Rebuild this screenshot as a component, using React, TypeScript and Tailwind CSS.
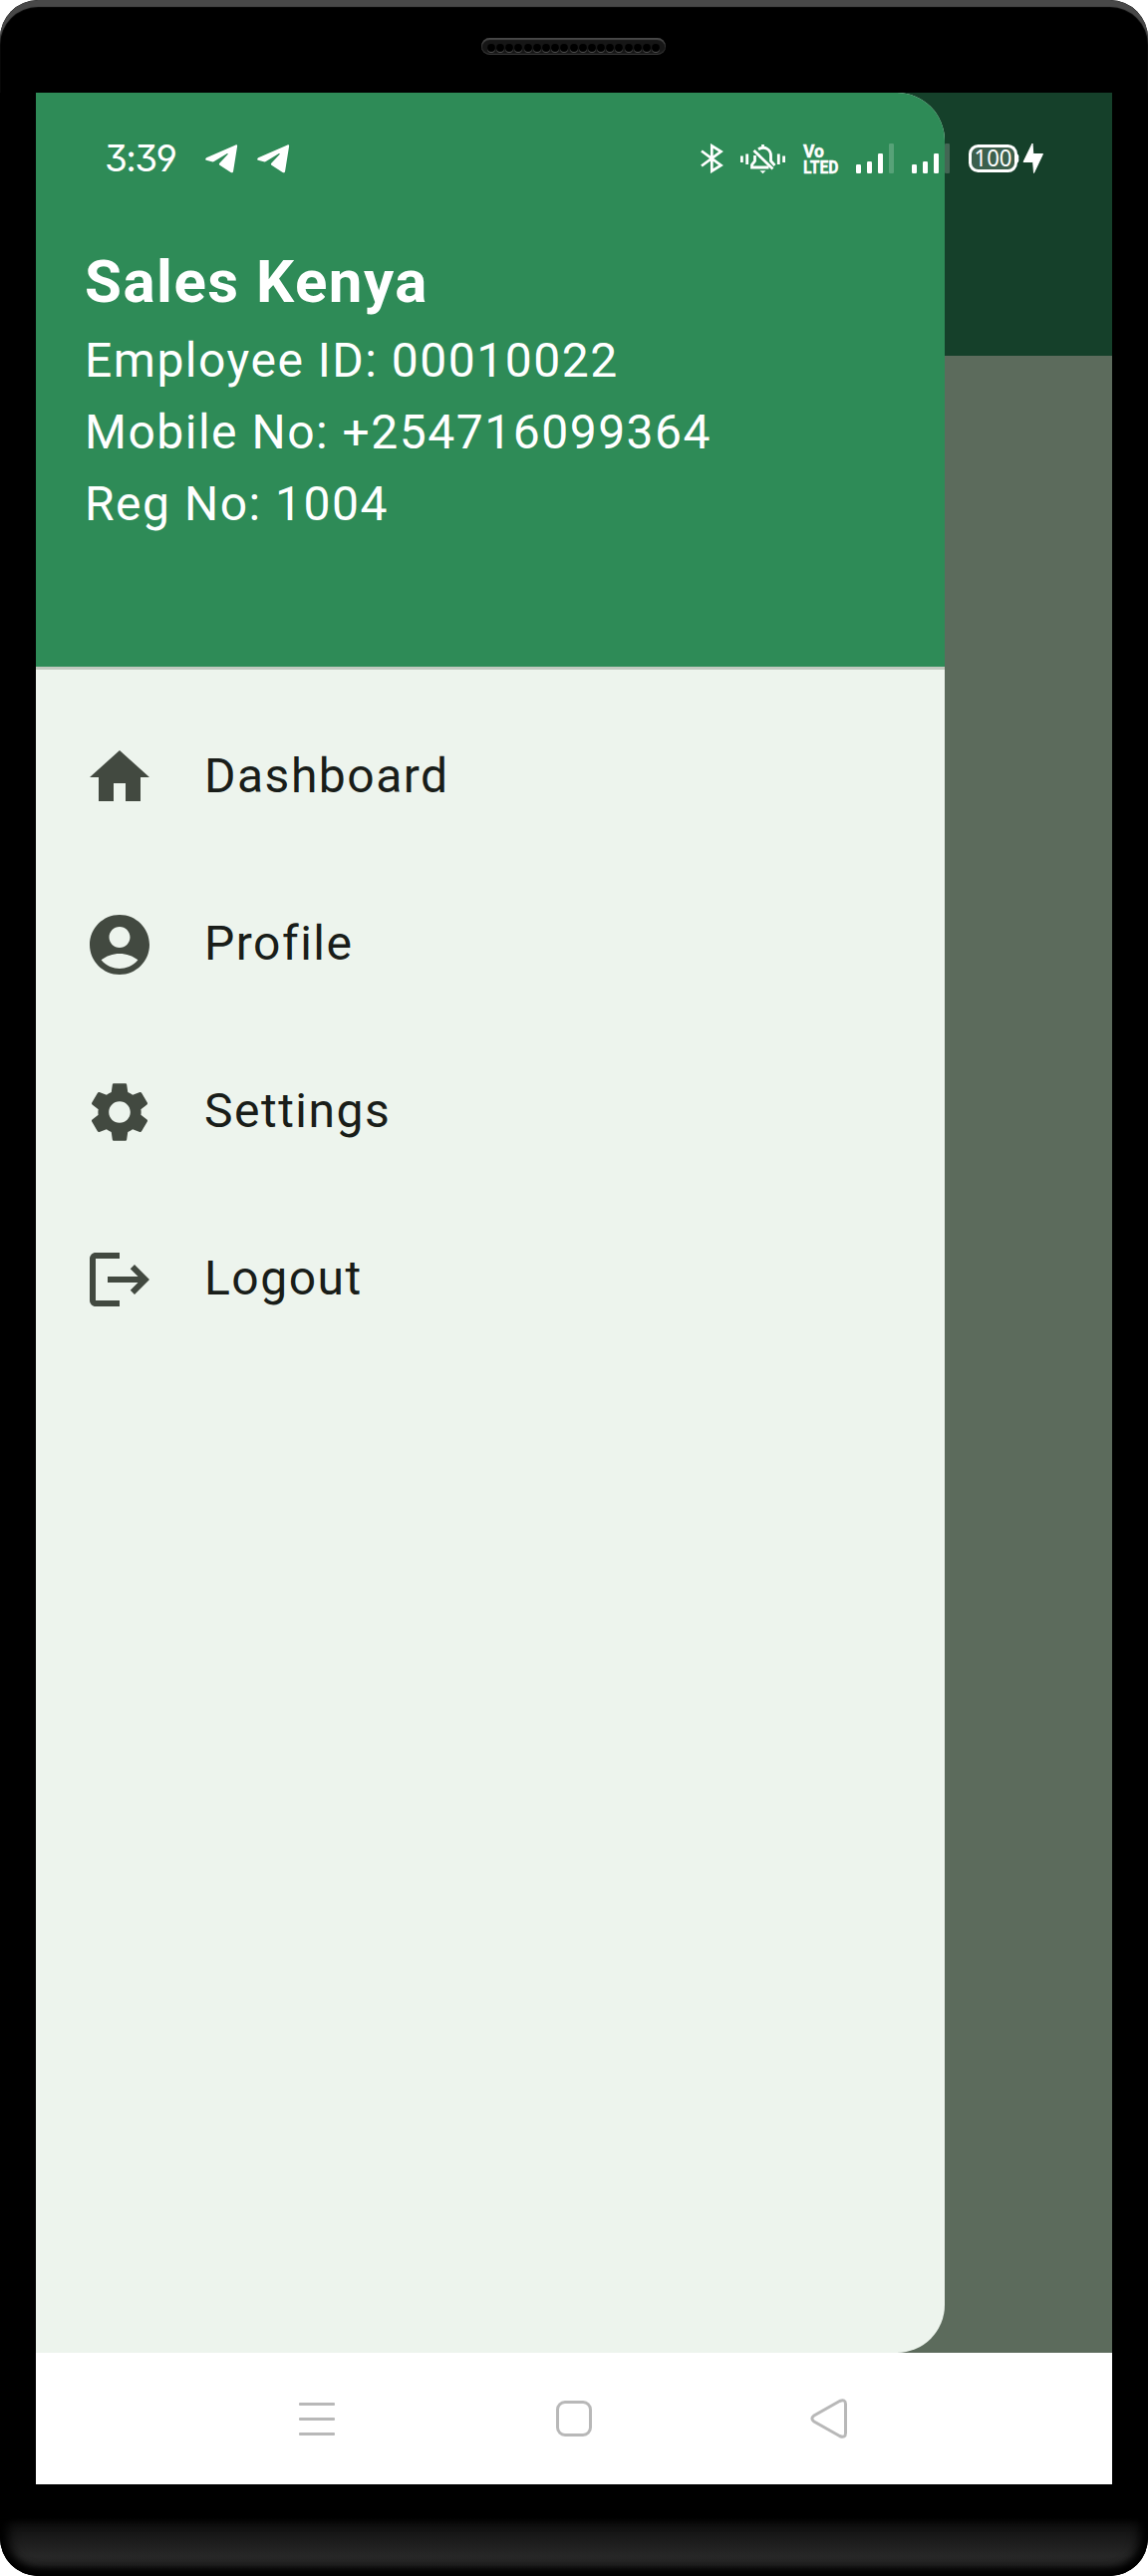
import type { ReactNode } from "react";

function TelegramIcon() {
  return (
    <svg className="h-[29px] w-[33px]" viewBox="0 0 33 29" fill="#fff">
      <path d="M1.2 13.2 30.5.4c1-.4 1.8.2 1.6 1.3l-4 25c-.3 1.7-1.2 2-2.5 1.3L14.500 20.800c-.8-.5-.8-1.400-.2-2l8-8.500c.8-.9.3-1.600-.7-1L9.200 16.800c-.9.6-1.700.7-2.600.5L1 15.800c-1.200-.5-1-2 .2-2.600z" />
    </svg>
  );
}

function BluetoothIcon() {
  return (
    <svg className="h-[30px] w-[24px]" viewBox="0 0 24 30" fill="none" stroke="#fff" strokeWidth="2.700" strokeLinejoin="miter">
      <path d="M1 7.500 20.500 22 11.300 27.700V2.300L20.500 8 1 22.500" />
    </svg>
  );
}

function SilentIcon() {
  return (
    <svg className="h-[31px] w-[45px]" viewBox="0 0 45 31" fill="none" stroke="#fff" strokeWidth="2.800">
      <path d="M1.400 12.500v6.500M6.700 10.500v10.500M38.300 10.500v10.500M43.600 12.500v6.500M13.500 7l19 18.500" />
      <path d="M18 5.800C25 1.800 30.500 6.500 30.500 12v5.500l4 4.500M14.500 12v5.500l-3 4v2.500h17" />
      <path d="M22.500 1v3" />
      <path d="M19.500 27.200h6l-3 3z" fill="#fff" stroke="none" />
    </svg>
  );
}

function VolteIcon() {
  return (
    <svg className="h-[31px] w-[36px] overflow-visible" viewBox="0 0 36 31" fill="#fff" stroke="#fff" strokeWidth=".4" fontFamily="Roboto, sans-serif" fontWeight="700">
      <text x="0" y="13.500" fontSize="18" textLength="21" lengthAdjust="spacingAndGlyphs">Vo</text>
      <text x="0" y="30.300" fontSize="19" textLength="35.500" lengthAdjust="spacingAndGlyphs">LTED</text>
    </svg>
  );
}

function SignalIcon() {
  return (
    <svg className="h-[30px] w-[38px]" viewBox="0 0 38 30" fill="#fff">
      <rect x="0" y="21" width="5" height="9" rx="1.200" />
      <rect x="11" y="18" width="5" height="12" rx="1.200" />
      <rect x="22" y="10" width="5" height="20" rx="1.200" />
      <rect x="33" y="0" width="5" height="30" rx="1.200" fillOpacity=".2" />
    </svg>
  );
}

function BatteryIcon() {
  return (
    <svg className="h-[30px] w-[76px] overflow-visible" viewBox="0 0 76 30">
      <rect x="1.500" y="2.500" width="46" height="25" rx="8" fill="#fff" fillOpacity=".17" stroke="#fff" strokeWidth="3" />
      <path d="M48 10q3 1 2.200 5 .8 4-2.200 5z" fill="#fff" />
      <text x="5.500" y="23" fontSize="23" textLength="38" fill="#fff" fontFamily="'Noto Sans', sans-serif" fontWeight="400" lengthAdjust="spacingAndGlyphs">100</text>
      <path d="M64 0 55 18.500h9.700L65.500 29.500 74.500 10.500h-9.700z" fill="#fff" stroke="#fff" strokeLinejoin="round" />
    </svg>
  );
}

function StatusBar() {
  return (
    <div className="absolute left-0 top-0 flex h-[132px] w-full items-center pl-[69px] pr-[68px] text-white">
      <span className="w-[102px] whitespace-nowrap font-['Inter'] text-[37px] font-normal leading-[48px] tracking-[-1.700px] [font-feature-settings:'cv09','cv04']">3:39</span>
      <div className="ml-[-1px] flex gap-[19px]">
        <TelegramIcon />
        <TelegramIcon />
      </div>
      <div className="ml-auto flex items-center">
        <BluetoothIcon />
        <div className="ml-[16px]"><SilentIcon /></div>
        <div className="ml-[18px]"><VolteIcon /></div>
        <div className="ml-[17px]"><SignalIcon /></div>
        <div className="ml-[18px]"><SignalIcon /></div>
        <div className="ml-[19px]"><BatteryIcon /></div>
      </div>
    </div>
  );
}

function MenuItem({ label, path }: { label: string; path: string }) {
  return (
    <button className="flex h-[168px] w-full items-center pl-[48px] text-left">
      <svg className="size-[72px] shrink-0" viewBox="0 0 24 24" fill="#424940">
        <path d={path} />
      </svg>
      <span className="mb-[2px] ml-[49px] text-[48px] leading-[72px] tracking-[1.500px] text-[#191d19]">{label}</span>
    </button>
  );
}

const menu = [
  { label: "Dashboard", path: "M10 20v-6h4v6h5v-8h3L12 3 2 12h3v8z" },
  {
    label: "Profile",
    path: "M12 2C6.480 2 2 6.480 2 12s4.480 10 10 10 10-4.480 10-10S17.520 2 12 2zm0 4c1.930 0 3.500 1.570 3.500 3.500S13.930 13 12 13s-3.500-1.570-3.500-3.500S10.070 6 12 6zm0 14c-2.030 0-4.430-.82-6.140-2.880C7.550 15.800 9.680 15 12 15s4.450.8 6.140 2.120C16.430 19.180 14.030 20 12 20z",
  },
  {
    label: "Settings",
    path: "M19.140 12.940c.04-.3.06-.61.06-.94 0-.32-.02-.64-.07-.94l2.030-1.580c.18-.14.23-.41.12-.61l-1.920-3.320c-.12-.22-.37-.29-.59-.22l-2.390.96c-.5-.38-1.030-.7-1.620-.94l-.36-2.540c-.04-.24-.24-.41-.48-.41h-3.840c-.24 0-.43.17-.47.41l-.36 2.540c-.59.24-1.130.57-1.620.94l-2.390-.96c-.22-.08-.47 0-.59.22L2.740 8.870c-.12.21-.08.47.12.61l2.030 1.580c-.05.3-.09.63-.09.94s.02.64.07.94l-2.030 1.580c-.18.14-.23.41-.12.61l1.920 3.320c.12.22.37.29.59.22l2.390-.96c.5.38 1.030.7 1.620.94l.36 2.540c.05.24.24.41.48.41h3.840c.24 0 .44-.17.47-.41l.36-2.540c.59-.24 1.130-.56 1.620-.94l2.390.96c.22.08.47 0 .59-.22l1.920-3.320c.12-.22.07-.47-.12-.61l-2.010-1.580zM12 15.600c-1.980 0-3.600-1.620-3.600-3.600s1.620-3.600 3.600-3.600 3.600 1.620 3.600 3.600-1.620 3.600-3.600 3.600z",
  },
  {
    label: "Logout",
    path: "M17 7l-1.410 1.410L18.170 11H8v2h10.170l-2.580 2.580L17 17l5-5zM4 5h8V3H4c-1.100 0-2 .9-2 2v14c0 1.100.9 2 2 2h8v-2H4V5z",
  },
];

function Drawer() {
  return (
    <aside className="h-full w-[912px] overflow-hidden rounded-r-[48px] bg-[#edf4ed]">
      <header className="h-[579px] border-b-[3px] border-[#c1c9bf] bg-[#2e8b57] pl-[49px] pt-[148px] text-[48px] leading-[72px] tracking-[1.500px] text-white">
        <h1 className="text-[60px] font-bold leading-[84px]">Sales Kenya</h1>
        <div className="pt-[1px]">
          <p>Employee ID: 00010022</p>
          <p>Mobile No: +254716099364</p>
          <p>Reg No: 1004</p>
        </div>
      </header>
      <nav className="pt-[24px]">
        {menu.map((item) => (
          <MenuItem key={item.label} {...item} />
        ))}
      </nav>
    </aside>
  );
}

function NavSlot({ children }: { children: ReactNode }) {
  return <button className="flex h-[40px] w-[42px] items-center justify-center">{children}</button>;
}

function NavigationBar() {
  return (
    <div className="flex h-[132px] items-center justify-center gap-[216px] bg-white">
      <NavSlot>
        <span className="flex flex-col gap-[12px]">
          <i className="h-[3px] w-[36px] rounded-[1px] bg-[#b8b8b8]" />
          <i className="h-[3px] w-[36px] rounded-[1px] bg-[#b8b8b8]" />
          <i className="h-[3px] w-[36px] rounded-[1px] bg-[#b8b8b8]" />
        </span>
      </NavSlot>
      <NavSlot>
        <span className="size-[36px] rounded-[9px] border-[3px] border-[#b8b8b8]" />
      </NavSlot>
      <NavSlot>
        <svg className="mr-[5px] h-[40px] w-[37px]" viewBox="0 0 37 40" fill="none" stroke="#b8b8b8" strokeWidth="3">
          <path d="M29.500 2.500 3.500 17.300Q.3 20 3.500 22.700L29.500 37.500Q35.500 40 35.500 34.500V5.500Q35.500 0 29.500 2.500Z" />
        </svg>
      </NavSlot>
    </div>
  );
}

function Speaker() {
  return (
    <div className="ml-[483px] flex h-[17px] w-[185px] items-center justify-center rounded-full bg-[#161616] pt-[2px] shadow-[inset_0_2px_1px_#484848,inset_0_-1px_1px_#3a3a3a,inset_1px_0_1px_#222]">
      {Array.from({ length: 19 }, (_, i) => (
        <i key={i} className="mx-[0.600px] size-[8px] rounded-full bg-black shadow-[0_1px_0_#505050]" />
      ))}
    </div>
  );
}

export default function App() {
  return (
    <div className="h-[2585px] w-[1152px] bg-white font-['Roboto']">
      <div className="flex h-full flex-col overflow-hidden rounded-[38px] bg-black">
        <div className="h-[93px] shrink-0 rounded-t-[38px] pt-[38px] shadow-[inset_0_7px_1px_#484848]">
          <Speaker />
        </div>
        <main className="mx-[36px] h-[2400px] shrink-0">
          <div className="relative h-[2268px] bg-[linear-gradient(#15402a_264px,#5c6b5c_264px)]">
            <Drawer />
            <StatusBar />
          </div>
          <NavigationBar />
        </main>
        <div className="mt-[34px] h-[58px] shrink-0 rounded-b-[38px] bg-[linear-gradient(#0b0b0b,#272727_65%,#242424_80%,#111)] shadow-[inset_0_-7px_9px_#000,inset_8px_0_12px_#000,inset_-8px_0_12px_#000]" />
      </div>
    </div>
  );
}
